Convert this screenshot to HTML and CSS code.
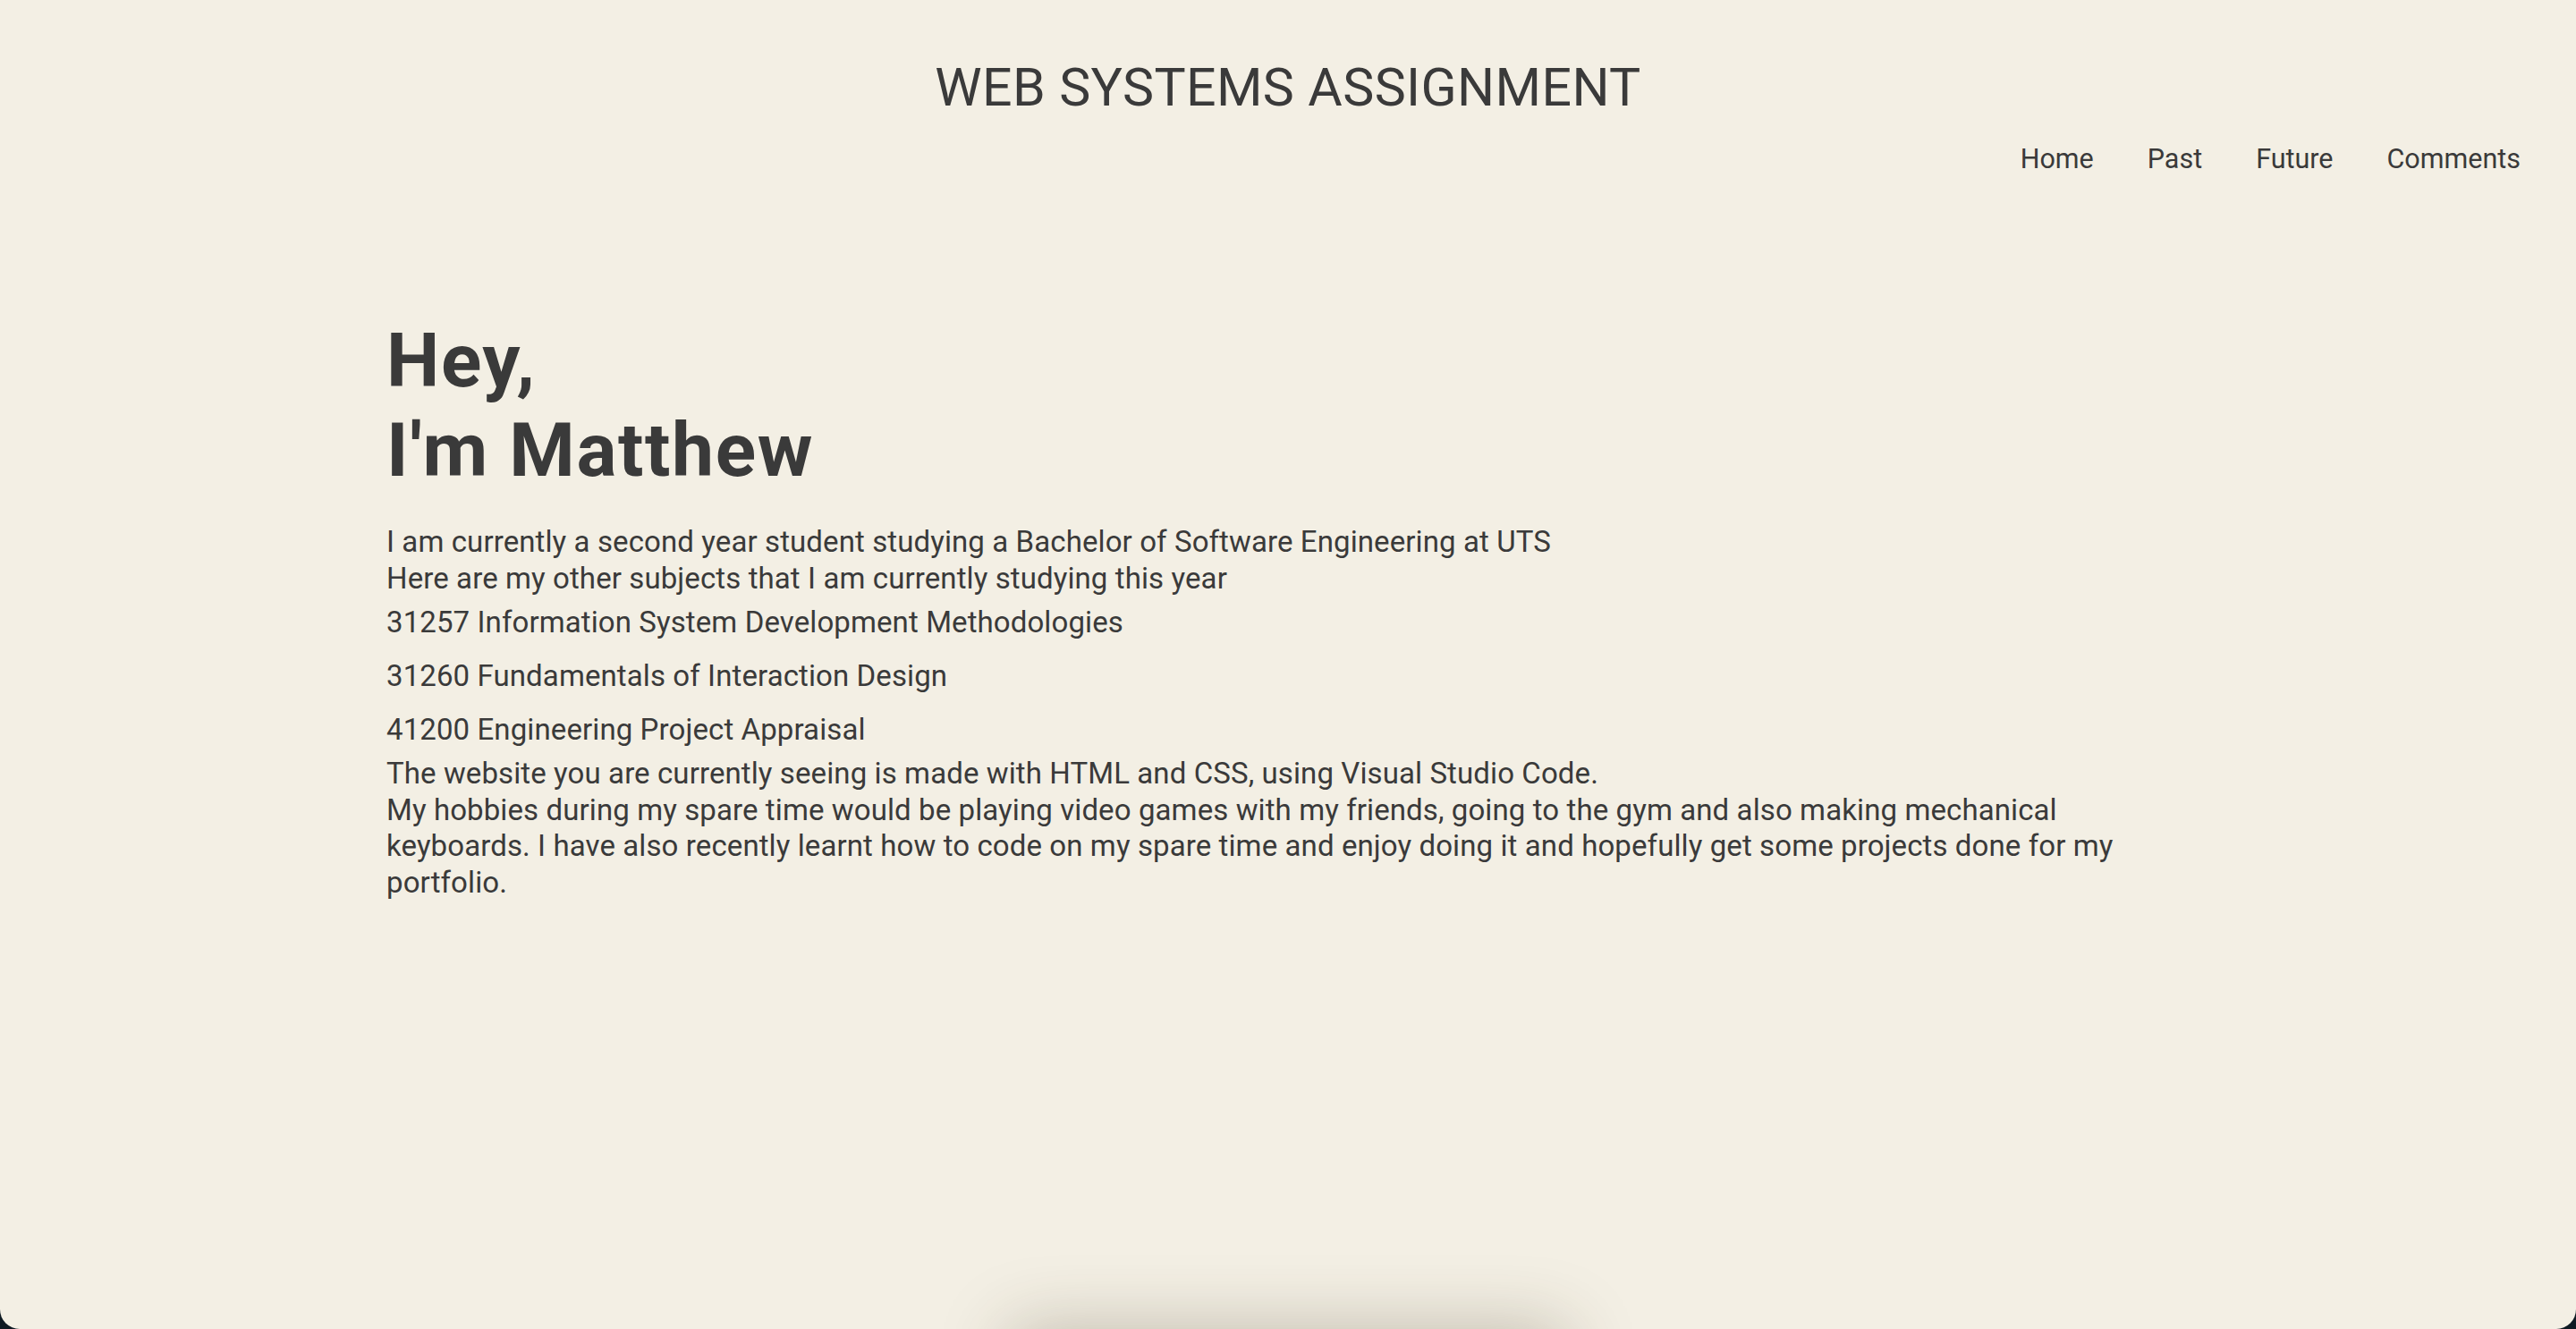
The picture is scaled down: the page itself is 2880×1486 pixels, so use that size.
FILE: index.html
```html
<!DOCTYPE html>
<html lang="en">
<head>
<meta charset="utf-8">
<title>Web Systems Assignment</title>
<link rel="stylesheet" href="styles.css">
</head>
<body>
<div class="page">
  <header class="site-header">
    <h1 class="site-title">WEB SYSTEMS ASSIGNMENT</h1>
    <nav class="nav">
      <a href="#">Home</a>
      <a href="#">Past</a>
      <a href="#">Future</a>
      <a href="#">Comments</a>
    </nav>
  </header>
  <main class="content">
    <h2 class="hero">Hey,<br>I'm Matthew</h2>
    <p class="text">I am currently a second year student studying a Bachelor of Software Engineering at UTS<br>Here are my other subjects that I am currently studying this year</p>
    <ul class="subjects">
      <li>31257 Information System Development Methodologies</li>
      <li>31260 Fundamentals of Interaction Design</li>
      <li>41200 Engineering Project Appraisal</li>
    </ul>
    <p class="text">The website you are currently seeing is made with HTML and CSS, using Visual Studio Code.<br>My hobbies during my spare time would be playing video games with my friends, going to the gym and also making mechanical keyboards. I have also recently learnt how to code on my spare time and enjoy doing it and hopefully get some projects done for my portfolio.</p>
  </main>
  <div class="shadow-box"></div>
</div>
</body>
</html>
```
FILE: styles.css
```css
html, body {
  margin: 0;
  padding: 0;
  background: #0e1a23;
}
.page {
  position: relative;
  height: 1486px;
  overflow: hidden;
  background: #f3efe4;
  border-radius: 0 0 22px 22px;
  color: #3a3a3a;
  font-family: Roboto, "Noto Sans", sans-serif;
}
.site-header {
  display: flex;
  flex-direction: column;
  padding-top: 62px;
}
.site-title {
  margin: 0;
  text-align: center;
  font-weight: 400;
  font-size: 59px;
  line-height: 72px;
  letter-spacing: 0.4px;
}
.nav {
  display: flex;
  justify-content: flex-end;
  gap: 60px;
  padding-right: 62px;
  margin-top: 24px;
}
.nav a {
  color: #3a3a3a;
  text-decoration: none;
  font-size: 30.5px;
  line-height: 40px;
}
.content {
  margin: 0 15%;
  padding-top: 156px;
}
.hero {
  margin: 0 0 32px;
  font-size: 84px;
  line-height: 100px;
  font-weight: 700;
  letter-spacing: 1.6px;
}
.text {
  margin: 0;
  font-size: 33px;
  line-height: 40.5px;
  letter-spacing: 0.1px;
}
.subjects {
  list-style: none;
  margin: 9px 0;
  padding: 0;
  display: flex;
  flex-direction: column;
  gap: 20px;
}
.subjects li {
  font-size: 33px;
  line-height: 40px;
  letter-spacing: 0.1px;
}
.shadow-box {
  position: absolute;
  left: 50%;
  bottom: -120px;
  width: 600px;
  height: 110px;
  margin-left: -300px;
  background: #f3efe4;
  box-shadow: 0 0 80px 10px rgba(60, 50, 30, 0.28);
}
```
